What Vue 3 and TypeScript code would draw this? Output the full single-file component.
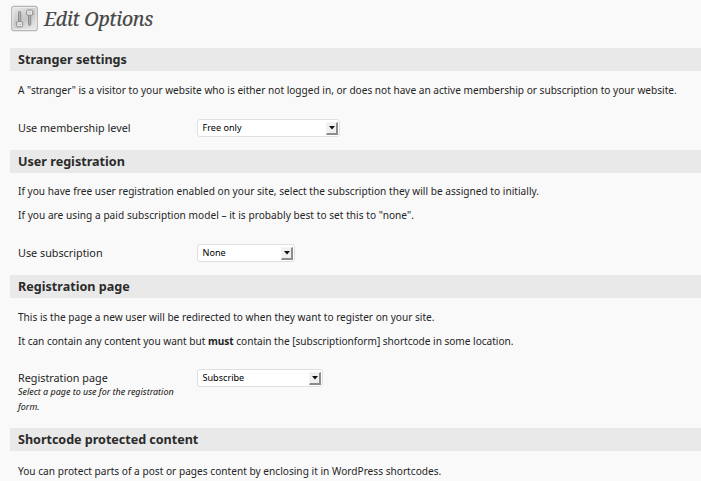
<script setup lang="ts">
interface Part { text: string; strong?: boolean }
interface Field { label: string; value: string; size: string; note?: string }
interface Section { title: string; kind: string; intro: { id: string; parts: Part[] }[]; field?: Field }

const sections: Section[] = [
  {
    title: 'Stranger settings',
    kind: 'stranger',
    intro: [
      { id: 'a', parts: [{ text: 'A "stranger" is a visitor to your website who is either not logged in, or does not have an active membership or subscription to your website.' }] },
    ],
    field: { label: 'Use membership level', value: 'Free only', size: 'wide' },
  },
  {
    title: 'User registration',
    kind: 'user',
    intro: [
      { id: 'b', parts: [{ text: 'If you have free user registration enabled on your site, select the subscription they will be assigned to initially.' }] },
      { id: 'c', parts: [{ text: 'If you are using a paid subscription model – it is probably best to set this to "none".' }] },
    ],
    field: { label: 'Use subscription', value: 'None', size: 'narrow' },
  },
  {
    title: 'Registration page',
    kind: 'registration',
    intro: [
      { id: 'd', parts: [{ text: 'This is the page a new user will be redirected to when they want to register on your site.' }] },
      { id: 'e', parts: [{ text: 'It can contain any content you want but ' }, { text: 'must', strong: true }, { text: ' contain the [subscriptionform] shortcode in some location.' }] },
    ],
    field: { label: 'Registration page', value: 'Subscribe', size: 'medium', note: 'Select a page to use for the registration form.' },
  },
  {
    title: 'Shortcode protected content',
    kind: 'shortcode',
    intro: [
      { id: 'f', parts: [{ text: 'You can protect parts of a post or pages content by enclosing it in WordPress shortcodes.' }] },
    ],
  },
]
</script>

<template>
  <main class="page">
    <header class="head">
      <svg class="icon" width="28" height="28" viewBox="0 0 28 28">
        <defs>
          <linearGradient id="plate" x1="0" y1="0" x2=".5" y2="1">
            <stop offset="0" stop-color="#ececec" />
            <stop offset=".6" stop-color="#c6c6c6" />
            <stop offset="1" stop-color="#e4e4e4" />
          </linearGradient>
        </defs>
        <rect x=".8" y="1.3" width="25.4" height="24.4" rx="1.8" fill="url(#plate)" stroke="#a0a0a0" />
        <rect x="1.9" y="2.4" width="23.2" height="22.2" rx="1" fill="none" stroke="#efefef" stroke-width="1" />
        <g fill="#b0b0b0" stroke="#858585" stroke-width=".9">
          <rect x="7.5" y="6.4" width="2.2" height="12" rx="1" />
          <rect x="17.5" y="8.5" width="2.2" height="12" rx="1" />
          <rect x="5.6" y="16.7" width="6.1" height="5.1" rx="1.2" fill="#e8e8e8" />
          <rect x="15.6" y="5.1" width="6.1" height="5.1" rx="1.2" fill="#e8e8e8" />
        </g>
        <path d="M7.4 19.3h2.4M17.4 7.7h2.4" stroke="#b4b4b4" />
      </svg>
      <h1 class="title">Edit Options</h1>
    </header>

    <section v-for="s in sections" :key="s.title" class="section" :class="s.kind">
      <h2 class="bar">{{ s.title }}</h2>
      <div class="intro">
        <p v-for="line in s.intro" :key="line.id" class="line" :class="'line-' + line.id"><template v-for="(p, i) in line.parts" :key="i"><strong v-if="p.strong">{{ p.text }}</strong><template v-else>{{ p.text }}</template></template></p>
      </div>
      <div v-if="s.field" class="field">
        <div class="caption">
          <label class="label">{{ s.field.label }}</label>
          <em v-if="s.field.note" class="note">{{ s.field.note }}</em>
        </div>
        <button type="button" class="select" :class="s.field.size">
          <span class="value">{{ s.field.value }}</span>
          <span class="arrow"><svg width="6" height="4" viewBox="0 0 6 4"><path d="M0 0h6L3 3.6z" fill="#111" /></svg></span>
        </button>
      </div>
    </section>
  </main>
</template>

<style>
body { background: #f9f9f9; }
</style>

<style scoped>
.page {
  box-sizing: border-box;
  height: 481px;
  overflow: hidden;
  padding-left: 10px;
  background: #f9f9f9;
  color: #242424;
  font-family: "Noto Sans", "Open Sans", sans-serif;
}
.head { display: flex; align-items: flex-start; height: 48px; }
.icon { flex: none; margin: 5px 0 0 1px; }
.title {
  margin: 5px 0 0 5px;
  font: italic 400 19.5px/27px "Noto Serif", "Liberation Serif", serif;
  letter-spacing: -0.28px;
  color: #464646;
  -webkit-text-stroke: 0.2px #464646;
  white-space: nowrap;
}
.bar {
  height: 23px;
  margin: 0;
  padding-left: 8px;
  background: #e9e9e9;
  color: #2b2b2b;
  font-size: 12.6px;
  font-weight: 700;
  line-height: 23px;
  white-space: nowrap;
}
.shortcode .bar { letter-spacing: -0.04px; }
.intro { padding: 7px 0 0 8px; }
.user .intro { padding: 6px 0 1px 8px; }
.shortcode .intro { padding-top: 8px; }
.line {
  width: max-content;
  height: 24px;
  margin: 0;
  font-size: 10.1px;
  line-height: 24px;
  white-space: nowrap;
}
.line-b, .line-f { letter-spacing: 0.02px; }
.line-c { letter-spacing: 0.04px; }
.line-d { letter-spacing: 0.01px; }
.line-e { letter-spacing: -0.02px; }
.field { display: flex; align-items: flex-start; height: 31px; padding: 17px 0 0 8px; }
.user .field { padding-top: 16px; }
.registration .field { height: 59px; padding-top: 16px; }
.caption { width: 179px; }
.label { display: block; font-size: 10.8px; line-height: 18px; white-space: nowrap; }
.note { display: block; width: 170px; margin-top: -2px; font-size: 8.95px; line-height: 14.5px; color: #111; }
.select {
  display: flex;
  align-items: center;
  justify-content: space-between;
  box-sizing: border-box;
  height: 18px;
  margin: 0;
  padding: 0 1px 0 4.5px;
  border: 1px solid #dfdfdf;
  border-radius: 3px;
  background: #fff;
  color: #000;
  font-family: inherit;
  font-size: 9.1px;
}
.value { line-height: 16px; }
.wide { width: 143px; }
.narrow { width: 98px; }
.medium { width: 126px; }
.arrow {
  display: flex;
  align-items: center;
  justify-content: center;
  box-sizing: border-box;
  width: 12px;
  height: 13px;
  border: solid;
  border-width: 1px 2px 2px 1px;
  border-color: #f4f4f4 #8c8c8c #8c8c8c #f4f4f4;
  background: #f0f0f0;
}
</style>
